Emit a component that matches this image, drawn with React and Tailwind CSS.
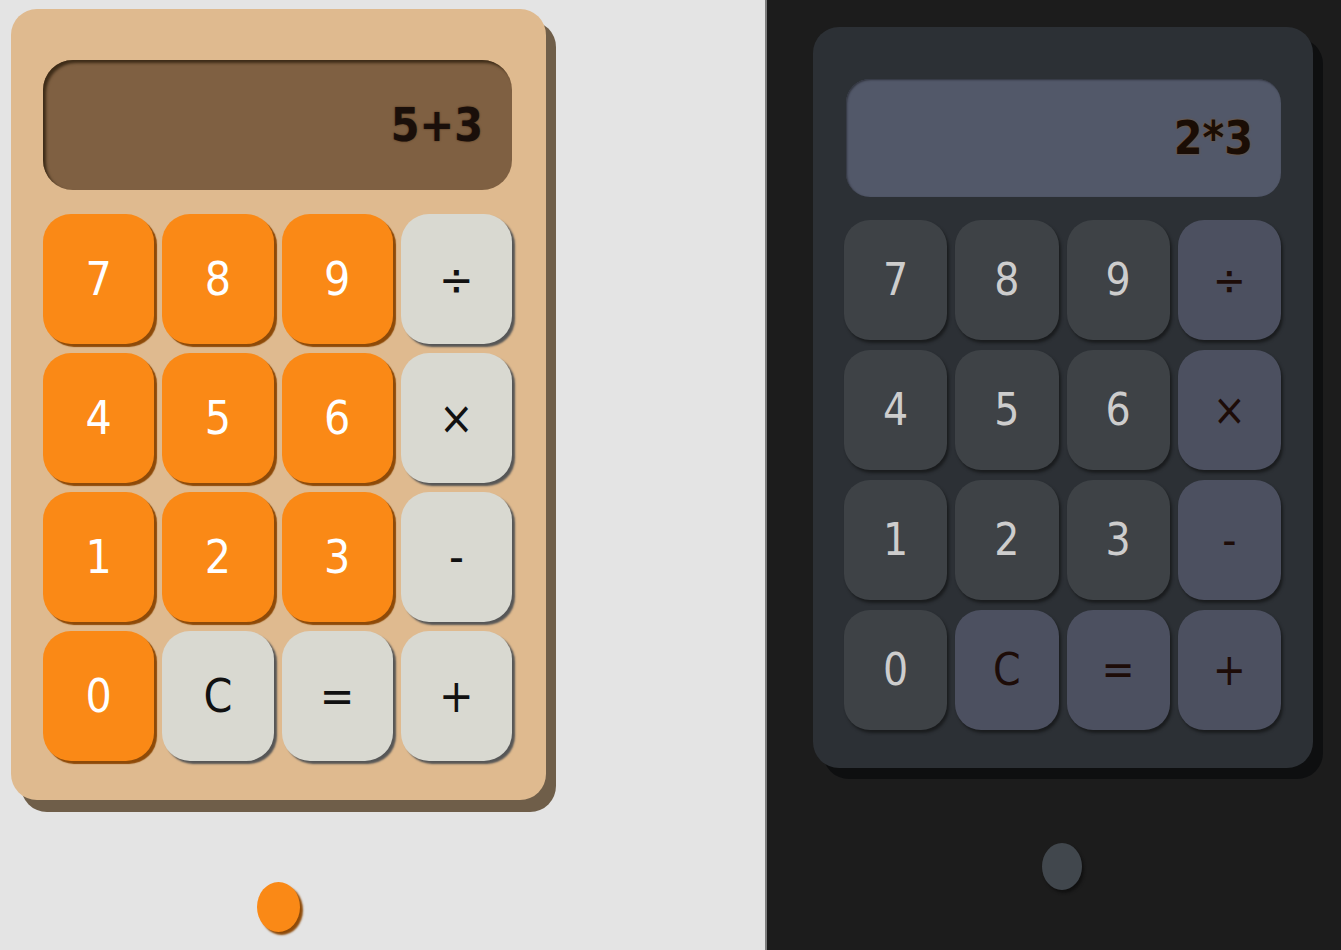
import React from 'react';

const keys = [
  ['7', 'num'], ['8', 'num'], ['9', 'num'], ['÷', 'op'],
  ['4', 'num'], ['5', 'num'], ['6', 'num'], ['×', 'op'],
  ['1', 'num'], ['2', 'num'], ['3', 'num'], ['-', 'op'],
  ['0', 'num'], ['C', 'op'], ['=', 'op'], ['+', 'op'],
];

function LightCalc() {
  return (
    <div className="flex flex-col items-start">
      <div className="w-[535px] h-[791px] rounded-[26px] bg-[#dfba8f] shadow-[10px_12px_0_#6f5e49] pt-[51px] pl-[32px]">
        <div className="w-[469px] h-[130px] rounded-[30px] bg-[#7f6042] shadow-[inset_3px_3px_3px_#3e2c18] flex items-center justify-end pr-[29px]">
          <span className="text-[46px] font-bold font-stretch-condensed text-[#1a0f0a] leading-none [text-shadow:0_0_2px_#4a3018]">5+3</span>
        </div>
        <div className="mt-[24px] w-[469px] grid grid-cols-4 gap-x-[8px] gap-y-[9px]">
          {keys.map(([k, t]) => (
            <div
              key={k}
              className={
                t === 'num'
                  ? 'h-[130px] rounded-[28px] bg-[#fa8916] shadow-[3px_3px_1px_#8e4a08] flex items-center justify-center text-white text-[46px] font-stretch-condensed'
                  : 'h-[130px] rounded-[28px] bg-[#d9d9d1] shadow-[3px_3px_2px_#565656] flex items-center justify-center text-[#111] text-[46px] font-stretch-condensed'
              }
            >
              {k}
            </div>
          ))}
        </div>
      </div>
      <div className="mt-[82px] ml-[246px] w-[43px] h-[50px] rounded-[50%] bg-[#fa8916] shadow-[3px_3px_2px_#8e4a08]" />
    </div>
  );
}

function DarkCalc() {
  return (
    <div className="flex flex-col items-start">
      <div className="w-[500px] h-[741px] rounded-[26px] bg-[#2c3035] shadow-[10px_11px_0_#0e0f10] pt-[52px] pl-[31px]">
        <div className="ml-[2px] w-[435px] h-[118px] rounded-[24px] bg-[#525869] shadow-[inset_1px_1px_2px_#30333d] flex items-center justify-end pr-[28px]">
          <span className="text-[46px] font-bold font-stretch-condensed text-[#1a0d05] leading-none [text-shadow:0_0_2px_#8a5a20]">2*3</span>
        </div>
        <div className="mt-[23px] w-[437px] grid grid-cols-4 gap-x-[8px] gap-y-[10px]">
          {keys.map(([k, t]) => (
            <div
              key={k}
              className={
                t === 'num'
                  ? 'h-[120px] rounded-[26px] bg-[#3e4246] shadow-[2px_3px_3px_#1a1c1e] flex items-center justify-center text-[#cdcdcd] text-[44px] font-stretch-condensed'
                  : 'h-[120px] rounded-[26px] bg-[#4c5060] shadow-[2px_3px_3px_#1a1c1e] flex items-center justify-center text-[#1d0c08] text-[44px] font-stretch-condensed'
              }
            >
              {k}
            </div>
          ))}
        </div>
      </div>
      <div className="mt-[75px] ml-[229px] w-[40px] h-[47px] rounded-[50%] bg-[#41474d] shadow-[2px_3px_3px_#111]" />
    </div>
  );
}

export default function App() {
  return (
    <div className="w-[1341px] h-[950px] overflow-hidden flex font-['DejaVu_Sans',sans-serif]">
      <div className="w-[765px] h-full bg-[#e4e4e4] pt-[9px] pl-[11px]">
        <LightCalc />
      </div>
      <div className="w-[2px] h-full bg-[#7c7c7c]" />
      <div className="flex-1 h-full bg-[#1c1c1c] pt-[27px] pl-[46px]">
        <DarkCalc />
      </div>
    </div>
  );
}
